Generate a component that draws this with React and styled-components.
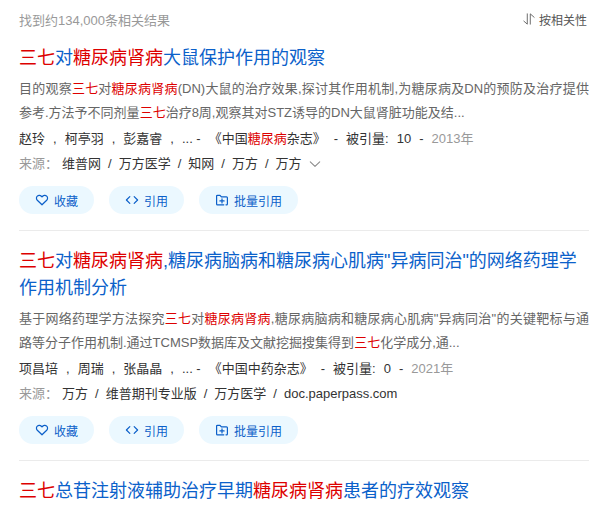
import React from "react";
import styled, { createGlobalStyle } from "styled-components";

const GlobalStyle = createGlobalStyle`
  body {
    margin: 0;
    background: #fff;
    font-family: "Liberation Sans", "Noto Sans CJK SC", sans-serif;
    font-size: 13px;
    color: #333;
  }
`;

const Page = styled.main`
  padding: 7px 16px 0 19px;
`;

const Toolbar = styled.header`
  display: flex;
  align-items: center;
  justify-content: space-between;
  height: 24px;
  margin-bottom: 14px;
`;

const Count = styled.span`
  color: #999;
`;

const SortButton = styled.button`
  display: flex;
  align-items: center;
  gap: 4px;
  padding: 0 2px 0 0;
  border: 0;
  background: none;
  font: inherit;
  font-size: 12px;
  color: #555;
  cursor: pointer;
`;

const Result = styled.article`
  padding-bottom: 16px;

  & + & {
    border-top: 1px solid #ebebeb;
    padding-top: 17px;
  }

  &:last-child {
    padding-bottom: 0;
  }
`;

const Title = styled.h3`
  margin: 0;
  font-size: 18px;
  font-weight: 400;
  line-height: 27px;
`;

const TitleLink = styled.a`
  color: #0b61ca;
  text-decoration: none;
`;

const Mark = styled.em`
  font-style: normal;
  color: #d00;
`;

const Abstract = styled.p`
  margin: 5px 0 1px;
  line-height: 24px;
  text-align: justify;
  color: #666;
`;

const Line = styled.div`
  display: flex;
  flex-wrap: wrap;
  align-items: center;
  column-gap: ${(p) => p.$gap}px;
  line-height: 25px;
`;

const PlainLink = styled.a`
  color: #333;
  text-decoration: none;
`;

const Muted = styled.span`
  color: #999;
`;

const SourceLabel = styled(Muted)`
  margin-right: -3px;
`;

const MoreButton = styled.button`
  display: flex;
  padding: 0;
  border: 0;
  background: none;
  color: #888;
  cursor: pointer;
`;

const Actions = styled.div`
  display: flex;
  gap: 15px;
  margin-top: 10px;
`;

const ActionButton = styled.button`
  display: flex;
  align-items: center;
  gap: 5px;
  height: 28px;
  padding: 0 16px;
  border: 0;
  border-radius: 14px;
  background: #ebf8ff;
  font: inherit;
  font-size: 12px;
  color: #0b5fc9;
  cursor: pointer;
`;

const Icon = ({ size = 14, children, ...rest }) => (
  <svg
    width={size}
    height={size}
    viewBox="0 0 14 14"
    fill="none"
    stroke="currentColor"
    strokeWidth="1.2"
    strokeLinecap="round"
    strokeLinejoin="round"
    aria-hidden="true"
    {...rest}
  >
    {children}
  </svg>
);

const SortIcon = () => (
  <Icon size={12} strokeWidth="1">
    <path d="M1 9.5L5 13V1M8.5 13V1L13 5" />
  </Icon>
);

const HeartIcon = () => (
  <Icon>
    <path d="M7 11.8L2.3 7.3C1.1 6 1.2 4.1 2.3 3.1C3.6 2 5.7 2.2 7 3.9C8.3 2.2 10.4 2 11.7 3.1C12.8 4.1 12.9 6 11.7 7.3Z" />
  </Icon>
);

const CodeIcon = () => (
  <Icon>
    <path d="M4.8 3.6L1.4 7L4.8 10.4M9.2 3.6L12.6 7L9.2 10.4" />
  </Icon>
);

const FolderIcon = () => (
  <Icon>
    <path d="M8.8 11.8H2.5Q1.6 11.8 1.6 10.9V3.2Q1.6 2.3 2.5 2.3H5L6.4 3.9H11.5Q12.4 3.9 12.4 4.8V10.9Q12.4 11.8 11.5 11.8H11" />
    <path d="M7 5.8V10M4.9 7.9H9.1" />
  </Icon>
);

const ChevronIcon = () => (
  <Icon size={12}>
    <path d="M1.5 4.5L7 9.8L12.5 4.5" />
  </Icon>
);

const TERMS = /(三七|糖尿病肾病)/;

const Highlight = ({ text, terms = TERMS }) =>
  text
    .split(terms)
    .map((part, i) => (i % 2 ? <Mark key={i}>{part}</Mark> : part));

const results = [
  {
    title: "三七对糖尿病肾病大鼠保护作用的观察",
    abstract:
      "目的观察三七对糖尿病肾病(DN)大鼠的治疗效果,探讨其作用机制,为糖尿病及DN的预防及治疗提供参考.方法予不同剂量三七治疗8周,观察其对STZ诱导的DN大鼠肾脏功能及结...",
    authors: ["赵玲", "柯亭羽", "彭嘉睿"],
    journal: "《中国糖尿病杂志》",
    cited: 10,
    year: "2013年",
    sources: ["维普网", "万方医学", "知网", "万方", "万方"],
    more: true,
  },
  {
    title: '三七对糖尿病肾病,糖尿病脑病和糖尿病心肌病"异病同治"的网络药理学作用机制分析',
    abstract:
      '基于网络药理学方法探究三七对糖尿病肾病,糖尿病脑病和糖尿病心肌病"异病同治"的关键靶标与通路等分子作用机制.通过TCMSP数据库及文献挖掘搜集得到三七化学成分,通...',
    authors: ["项昌培", "周瑞", "张晶晶"],
    journal: "《中国中药杂志》",
    cited: 0,
    year: "2021年",
    sources: ["万方", "维普期刊专业版", "万方医学", "doc.paperpass.com"],
  },
  { title: "三七总苷注射液辅助治疗早期糖尿病肾病患者的疗效观察" },
];

const Details = ({ item }) => (
  <>
    <Abstract>
      <Highlight text={item.abstract} />
    </Abstract>
    <Line $gap={8}>
      {item.authors.map((name) => (
        <React.Fragment key={name}>
          <PlainLink href="#">{name}</PlainLink>
          <span>,</span>
        </React.Fragment>
      ))}
      <span>... -</span>
      <PlainLink href="#">
        <Highlight text={item.journal} terms={/(糖尿病)/} />
      </PlainLink>
      <span>-</span>
      <span>被引量:</span>
      <PlainLink href="#">{item.cited}</PlainLink>
      <span>-</span>
      <Muted>{item.year}</Muted>
    </Line>
    <Line $gap={7}>
      <SourceLabel>来源：</SourceLabel>
      {item.sources.map((source, i) => (
        <React.Fragment key={i}>
          {i > 0 && <span>/</span>}
          <PlainLink href="#">{source}</PlainLink>
        </React.Fragment>
      ))}
      {item.more && (
        <MoreButton type="button" aria-label="更多来源">
          <ChevronIcon />
        </MoreButton>
      )}
    </Line>
    <Actions>
      <ActionButton type="button">
        <HeartIcon />
        收藏
      </ActionButton>
      <ActionButton type="button">
        <CodeIcon />
        引用
      </ActionButton>
      <ActionButton type="button">
        <FolderIcon />
        批量引用
      </ActionButton>
    </Actions>
  </>
);

export default function App() {
  return (
    <>
      <GlobalStyle />
      <Page lang="zh-CN">
        <Toolbar>
          <Count>找到约134,000条相关结果</Count>
          <SortButton type="button">
            <SortIcon />
            按相关性
          </SortButton>
        </Toolbar>
        <section>
          {results.map((item) => (
            <Result key={item.title}>
              <Title>
                <TitleLink href="#">
                  <Highlight text={item.title} />
                </TitleLink>
              </Title>
              {item.abstract && <Details item={item} />}
            </Result>
          ))}
        </section>
      </Page>
    </>
  );
}
